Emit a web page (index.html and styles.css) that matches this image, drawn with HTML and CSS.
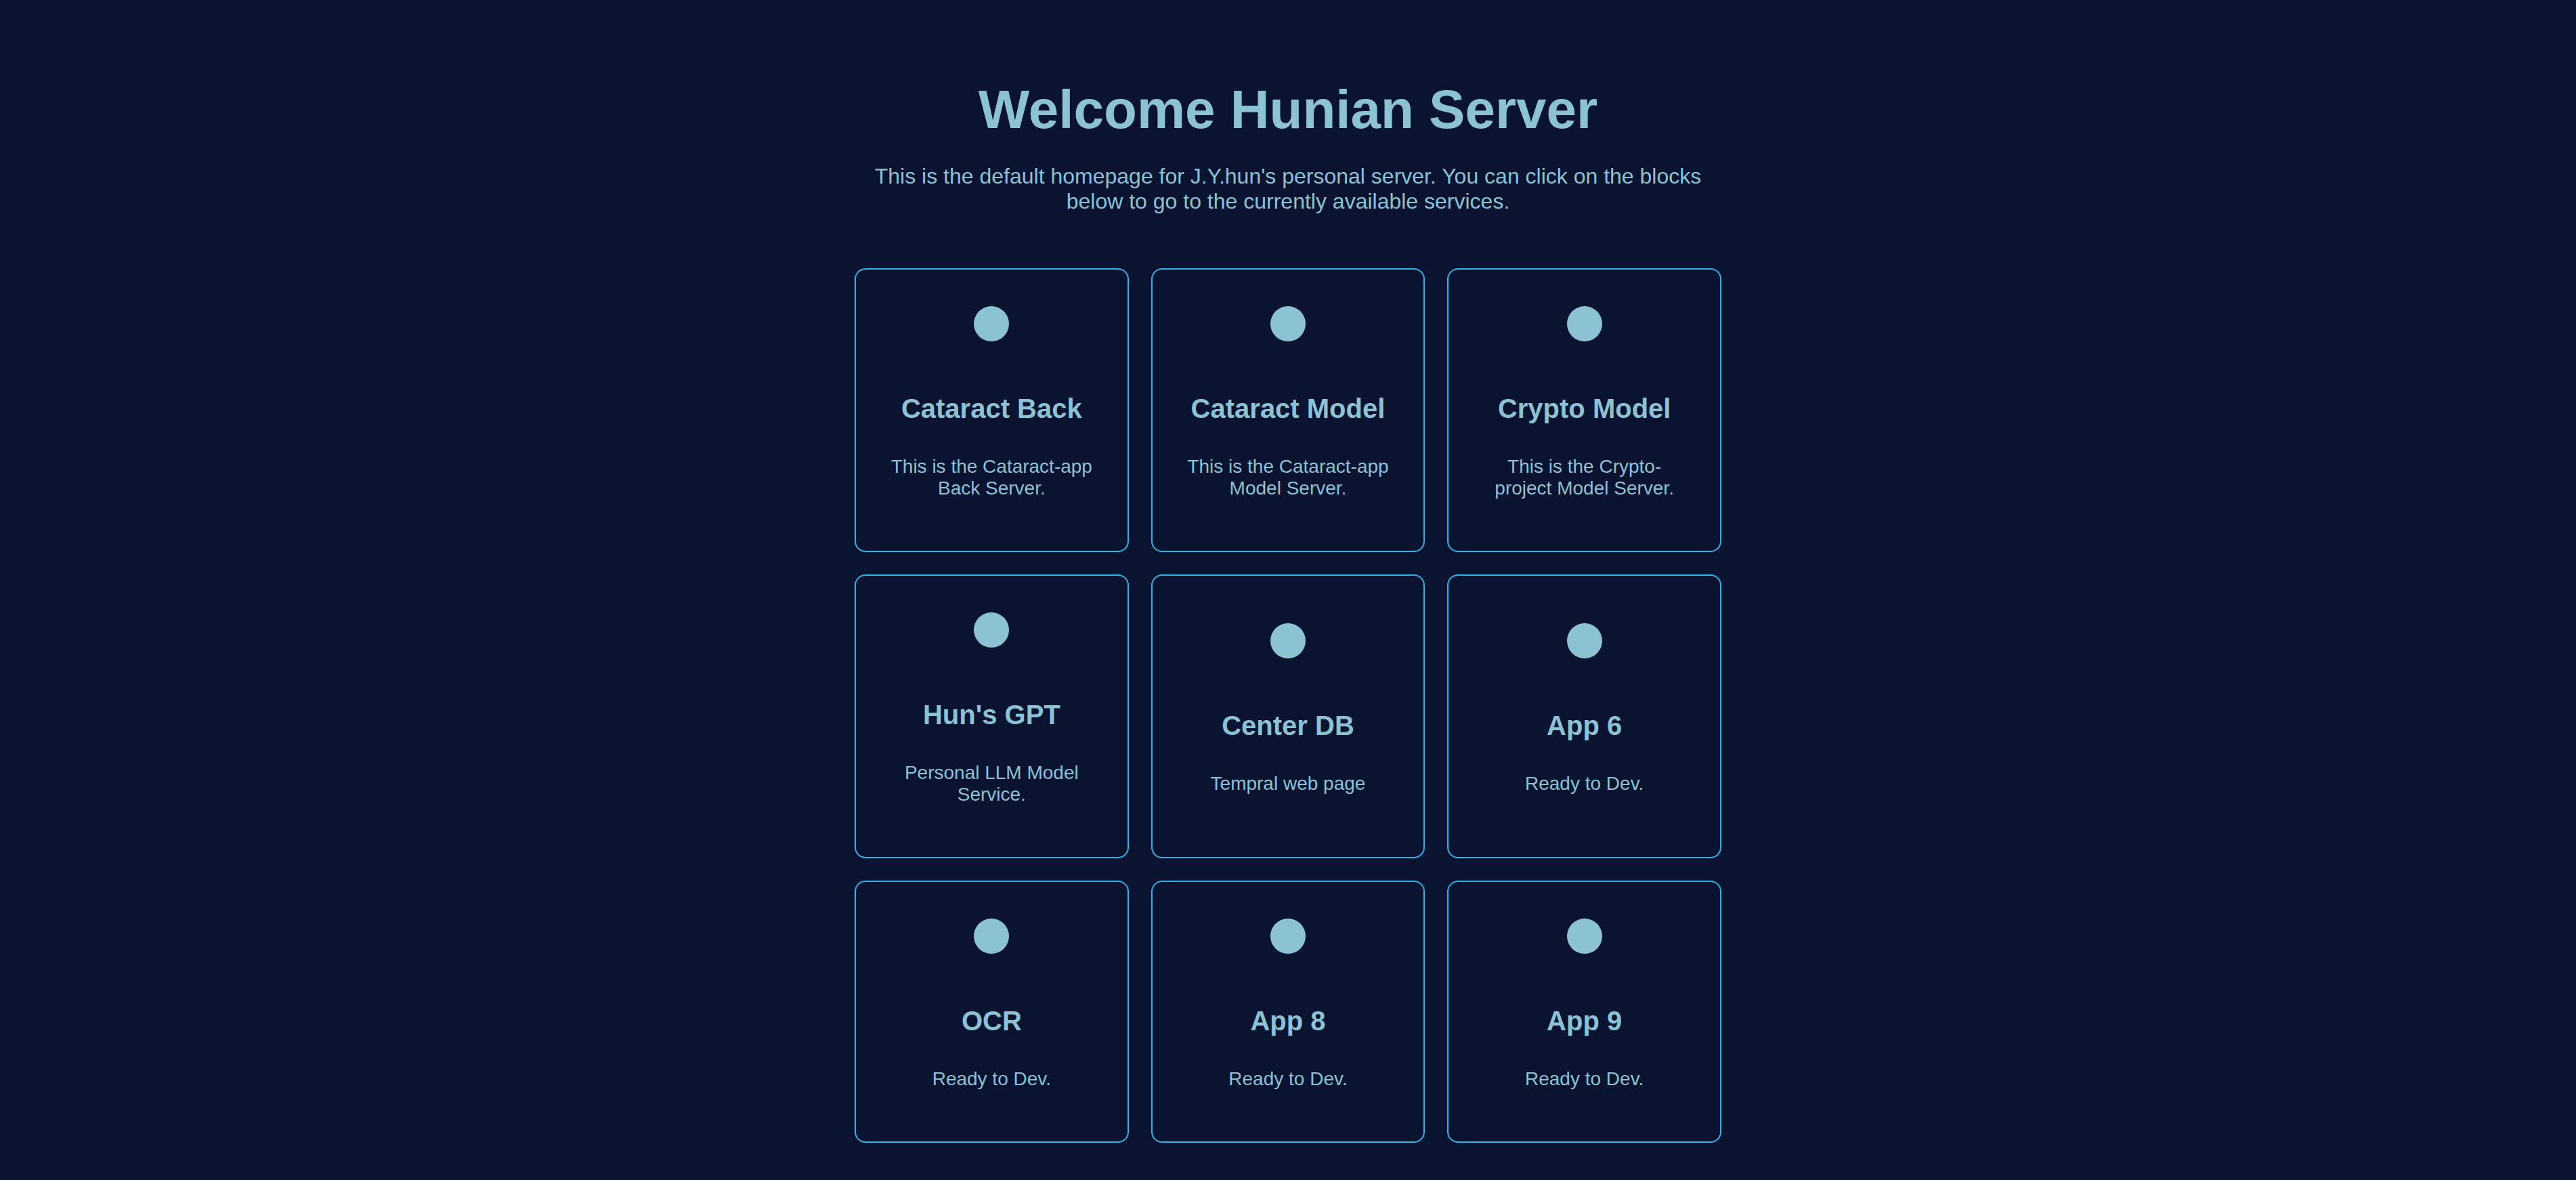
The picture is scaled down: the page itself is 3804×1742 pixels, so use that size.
FILE: index.html
```html
<!DOCTYPE html>
<html lang="en">
<head>
<meta charset="utf-8">
<title>Welcome Hunian Server</title>
<link rel="stylesheet" href="styles.css">
</head>
<body>
<main class="page">
  <h1 class="title">Welcome Hunian Server</h1>
  <p class="intro">This is the default homepage for J.Y.hun's personal server. You can click on the blocks below to go to the currently available services.</p>
  <section class="grid">
    <a class="card" href="#"><span class="dot"></span><h2 class="card-title">Cataract Back</h2><p class="card-desc">This is the Cataract-app Back Server.</p></a>
    <a class="card" href="#"><span class="dot"></span><h2 class="card-title">Cataract Model</h2><p class="card-desc">This is the Cataract-app Model Server.</p></a>
    <a class="card" href="#"><span class="dot"></span><h2 class="card-title">Crypto Model</h2><p class="card-desc">This is the Crypto-project Model Server.</p></a>
    <a class="card" href="#"><span class="dot"></span><h2 class="card-title">Hun's GPT</h2><p class="card-desc">Personal LLM Model Service.</p></a>
    <a class="card" href="#"><span class="dot"></span><h2 class="card-title">Center DB</h2><p class="card-desc">Tempral web page</p></a>
    <a class="card" href="#"><span class="dot"></span><h2 class="card-title">App 6</h2><p class="card-desc">Ready to Dev.</p></a>
    <a class="card" href="#"><span class="dot"></span><h2 class="card-title">OCR</h2><p class="card-desc">Ready to Dev.</p></a>
    <a class="card" href="#"><span class="dot"></span><h2 class="card-title">App 8</h2><p class="card-desc">Ready to Dev.</p></a>
    <a class="card" href="#"><span class="dot"></span><h2 class="card-title">App 9</h2><p class="card-desc">Ready to Dev.</p></a>
  </section>
</main>
</body>
</html>
```

FILE: styles.css
```css
html, body {
  margin: 0;
  padding: 0;
}

body {
  background: #0a1330;
  color: #8bc2d4;
  font-family: "Liberation Sans", Arial, Helvetica, sans-serif;
}

.page {
  width: 1280px;
  margin: 0 auto;
  padding: 116px 0 30px;
  text-align: center;
}

.title {
  margin: 0;
  font-size: 80px;
  font-weight: 700;
  line-height: normal;
}

.intro {
  margin: 34px 0 0;
  font-size: 32px;
  line-height: normal;
}

.grid {
  display: grid;
  grid-template-columns: repeat(3, 1fr);
  gap: 33px;
  margin-top: 80px;
}

.card {
  display: flex;
  flex-direction: column;
  align-items: center;
  justify-content: center;
  border: 2px solid #2bb4e6;
  border-radius: 16px;
  padding: 48px;
  color: inherit;
  text-decoration: none;
}

.dot {
  display: block;
  width: 52px;
  height: 52px;
  margin-top: 6px;
  border-radius: 50%;
  background: #8bc2d4;
}

.card-title {
  margin: 77px 0 0;
  font-size: 40px;
  font-weight: 700;
  line-height: normal;
}

.card-desc {
  margin: 47px 0 28px;
  font-size: 28px;
  line-height: normal;
}
```
